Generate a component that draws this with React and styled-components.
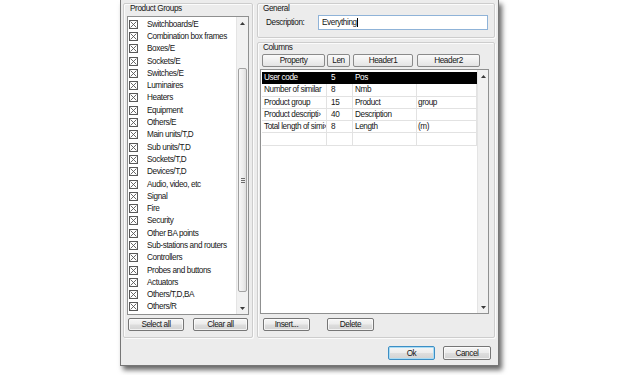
import React from 'react';
import styled, { createGlobalStyle } from 'styled-components';

const Global = createGlobalStyle`
  html, body { margin: 0; padding: 0; background: #fff; }
  body {
    font-family: "Liberation Sans", Arial, sans-serif;
    font-size: 8.2px;
    letter-spacing: -0.4px;
    color: #161616;
  }
  * { box-sizing: border-box; }
`;

const Page = styled.div`
  width: 620px;
  height: 375px;
  padding-left: 120px;
  overflow: hidden;
`;

const Dialog = styled.div`
  width: 379px;
  height: 366px;
  background: #ececec;
  border: 1px solid #767676;
  border-top: none;
  box-shadow: 3px 4px 5px rgba(0, 0, 0, 0.6);
  padding: 3px 3px 0 2px;
  display: flex;
  flex-direction: column;
`;

const Body = styled.div`
  display: flex;
  gap: 4px;
  height: 335px;
`;

const GroupBox = styled.div`
  width: ${p => p.$w}px;
  height: ${p => p.$h}px;
  border: 1px solid #cdcdcd;
  border-radius: 2px;
  box-shadow: inset 1px 1px 0 #fbfbfb, 1px 1px 0 #fbfbfb;
  padding: 0 ${p => p.$px}px;
  display: flex;
  flex-direction: column;
  flex: none;
`;

const Legend = styled.div`
  height: 10px;
  line-height: 10px;
  padding-left: ${p => p.$indent}px;
  margin-bottom: ${p => p.$mb}px;
  white-space: nowrap;
`;

const Column = styled.div`
  width: 238px;
  display: flex;
  flex-direction: column;
  gap: 4px;
`;

const ListBox = styled.div`
  height: ${p => p.$h}px;
  margin-left: ${p => p.$ml || 0}px;
  width: ${p => (p.$w ? p.$w + 'px' : 'auto')};
  border: 1px solid #8f9090;
  background: #fff;
  display: flex;
  flex: none;
`;

const Items = styled.div`
  flex: 1;
  padding-top: 1px;
  min-width: 0;
`;

const Item = styled.div`
  height: 12.3px;
  display: flex;
  align-items: center;
  gap: 9px;
  padding-left: 1px;
  white-space: nowrap;
`;

const VScroll = styled.div`
  width: ${p => p.$w}px;
  background: #f1f1f1;
  border-left: 1px solid #e4e4e4;
  display: flex;
  flex-direction: column;
  align-items: center;
  flex: none;
`;

const ArrowBox = styled.div`
  height: 12px;
  width: 100%;
  display: flex;
  align-items: center;
  justify-content: center;
  flex: none;
`;

const Track = styled.div`
  flex: ${p => p.$grow};
  height: ${p => (p.$h ? p.$h + 'px' : 'auto')};
  flex-shrink: ${p => (p.$h ? 0 : 1)};
`;

const Thumb = styled.div`
  width: 9px;
  height: ${p => p.$h}px;
  flex: none;
  border: 1px solid #a2a2a2;
  border-radius: 2px;
  background: linear-gradient(90deg, #f7f7f7 0%, #ececec 60%, #dedede 100%);
  display: flex;
  flex-direction: column;
  align-items: center;
  justify-content: center;
  gap: 1px;
`;

const Grip = styled.div`
  width: 4px;
  height: 1px;
  background: #6c6c6c;
`;

const ButtonRow = styled.div`
  display: flex;
  gap: ${p => p.$gap}px;
  margin-top: ${p => p.$mt}px;
  padding-left: ${p => p.$pl || 0}px;
  justify-content: ${p => (p.$end ? 'flex-end' : 'flex-start')};
  padding-right: ${p => p.$pr || 0}px;
`;

const Button = styled.div`
  width: ${p => p.$w}px;
  height: ${p => p.$h || 13}px;
  border: 1px solid ${p => (p.$default ? '#3d8ec4' : '#767676')};
  border-radius: 2px;
  background: linear-gradient(#f6f6f6 0%, #ececec 48%, #dedede 52%, #d2d2d2 100%);
  box-shadow: inset 0 0 0 1px ${p => (p.$default ? '#a9dcf5' : 'rgba(255,255,255,0.7)')};
  display: flex;
  align-items: center;
  justify-content: center;
  white-space: nowrap;
  flex: none;
`;

const FieldRow = styled.div`
  display: flex;
  align-items: center;
  margin-top: 1px;
  padding-left: 8px;
`;

const FieldLabel = styled.div`
  width: 52px;
`;

const Input = styled.div`
  width: 170px;
  height: 15px;
  background: #fff;
  border: 1px solid #8fb3d8;
  display: flex;
  align-items: center;
  padding-left: 3px;
`;

const Caret = styled.span`
  display: inline-block;
  width: 1px;
  height: 9px;
  background: #000;
  margin-left: 0.5px;
`;

const HeaderRow = styled.div`
  display: flex;
  padding-left: 4px;
  margin-top: 1px;
`;

const HeaderCell = styled.div`
  width: ${p => p.$w}px;
  margin-right: ${p => p.$mr || 0}px;
  height: 13px;
  border: 1px solid #8a8a8a;
  border-radius: 2px;
  background: linear-gradient(#fafafa 0%, #efefef 50%, #e3e3e3 100%);
  display: flex;
  align-items: center;
  justify-content: center;
  flex: none;
`;

const Grid = styled.div`
  flex: 1;
  padding: 2px 0 0 1px;
  min-width: 0;
`;

const GridRow = styled.div`
  display: grid;
  grid-template-columns: 65px 26px 64px 60px;
  height: 12.3px;
  background: ${p => (p.$selected ? '#000' : 'transparent')};
  color: ${p => (p.$selected ? '#fff' : 'inherit')};
`;

const Cell = styled.div`
  border-right: 1px solid ${p => (p.$sel ? '#000' : '#e2e2e2')};
  border-bottom: 1px solid ${p => (p.$sel ? '#000' : '#e2e2e2')};
  padding-left: ${p => p.$pl}px;
  line-height: 11.3px;
  white-space: nowrap;
  overflow: hidden;
`;

const Spacer = styled.div`
  height: ${p => p.$h}px;
  flex: none;
`;

const CheckIcon = () => (
  <svg width="9" height="9" viewBox="0 0 9 9" style={{ flex: 'none' }}>
    <rect x="0.5" y="0.5" width="8" height="8" fill="#fff" stroke="#585858" strokeWidth="1" />
    <path d="M1.6 1.6L7.4 7.4M7.4 1.6L1.6 7.4" stroke="#585858" strokeWidth="0.9" />
  </svg>
);

const Tri = ({ down }) => (
  <svg width="5" height="3" viewBox="0 0 5 3">
    <path d={down ? 'M0 0H5L2.5 3Z' : 'M0 3H5L2.5 0Z'} fill="#3a3a3a" />
  </svg>
);

const groups = [
  'Switchboards/E', 'Combination box frames', 'Boxes/E', 'Sockets/E', 'Switches/E',
  'Luminaires', 'Heaters', 'Equipment', 'Others/E', 'Main units/T,D', 'Sub units/T,D',
  'Sockets/T,D', 'Devices/T,D', 'Audio, video, etc', 'Signal', 'Fire', 'Security',
  'Other BA points', 'Sub-stations and routers', 'Controllers', 'Probes and buttons',
  'Actuators', 'Others/T,D,BA', 'Others/R',
];

const rows = [
  ['User code', '5', 'Pos', ''],
  ['Number of similar', '8', 'Nmb', ''],
  ['Product group', '15', 'Product', 'group'],
  ['Product descripti\u203a', '40', 'Description', ''],
  ['Total length of simi\u203a', '8', 'Length', '(m)'],
  ['', '', '', ''],
];

export default function App() {
  return (
    <>
      <Global />
      <Page>
        <Dialog>
          <Body>
            <GroupBox $w={130} $h={335} $px={3}>
              <Legend $indent={3} $mb={2}>Product Groups</Legend>
              <ListBox $h={299}>
                <Items>
                  {groups.map(g => (
                    <Item key={g}>
                      <CheckIcon />
                      <span>{g}</span>
                    </Item>
                  ))}
                </Items>
                <VScroll $w={12}>
                  <ArrowBox><Tri /></ArrowBox>
                  <Track $h={39} />
                  <Thumb $h={224}>
                    <Grip /><Grip /><Grip />
                  </Thumb>
                  <Track $grow={1} />
                  <ArrowBox><Tri down /></ArrowBox>
                </VScroll>
              </ListBox>
              <ButtonRow $gap={9} $mt={3} $pl={1}>
                <Button $w={56}>Select all</Button>
                <Button $w={55}>Clear all</Button>
              </ButtonRow>
            </GroupBox>

            <Column>
              <GroupBox $w={238} $h={35} $px={0}>
                <Legend $indent={5} $mb={0}>General</Legend>
                <FieldRow>
                  <FieldLabel>Description:</FieldLabel>
                  <Input>Everything<Caret /></Input>
                </FieldRow>
              </GroupBox>

              <GroupBox $w={238} $h={296} $px={0}>
                <Legend $indent={5} $mb={0}>Columns</Legend>
                <HeaderRow>
                  <HeaderCell $w={63} $mr={2}>Property</HeaderCell>
                  <HeaderCell $w={23} $mr={3}>Len</HeaderCell>
                  <HeaderCell $w={60} $mr={4}>Header1</HeaderCell>
                  <HeaderCell $w={63}>Header2</HeaderCell>
                </HeaderRow>
                <Spacer $h={2} />
                <ListBox $h={245} $w={229} $ml={2}>
                  <Grid>
                    {rows.map((r, i) => (
                      <GridRow key={i} $selected={i === 0}>
                        <Cell $sel={i === 0} $pl={2}>{r[0]}</Cell>
                        <Cell $sel={i === 0} $pl={4}>{r[1]}</Cell>
                        <Cell $sel={i === 0} $pl={2}>{r[2]}</Cell>
                        <Cell $sel={i === 0} $pl={1}>{r[3]}</Cell>
                      </GridRow>
                    ))}
                  </Grid>
                  <VScroll $w={11}>
                    <ArrowBox><Tri /></ArrowBox>
                    <Track $grow={1} />
                    <ArrowBox><Tri down /></ArrowBox>
                  </VScroll>
                </ListBox>
                <ButtonRow $gap={17} $mt={4} $pl={5}>
                  <Button $w={47}>Insert...</Button>
                  <Button $w={47}>Delete</Button>
                </ButtonRow>
              </GroupBox>
            </Column>
          </Body>
          <ButtonRow $gap={8} $mt={8} $end $pr={4}>
            <Button $w={47} $h={14} $default>Ok</Button>
            <Button $w={48} $h={14}>Cancel</Button>
          </ButtonRow>
        </Dialog>
      </Page>
    </>
  );
}
